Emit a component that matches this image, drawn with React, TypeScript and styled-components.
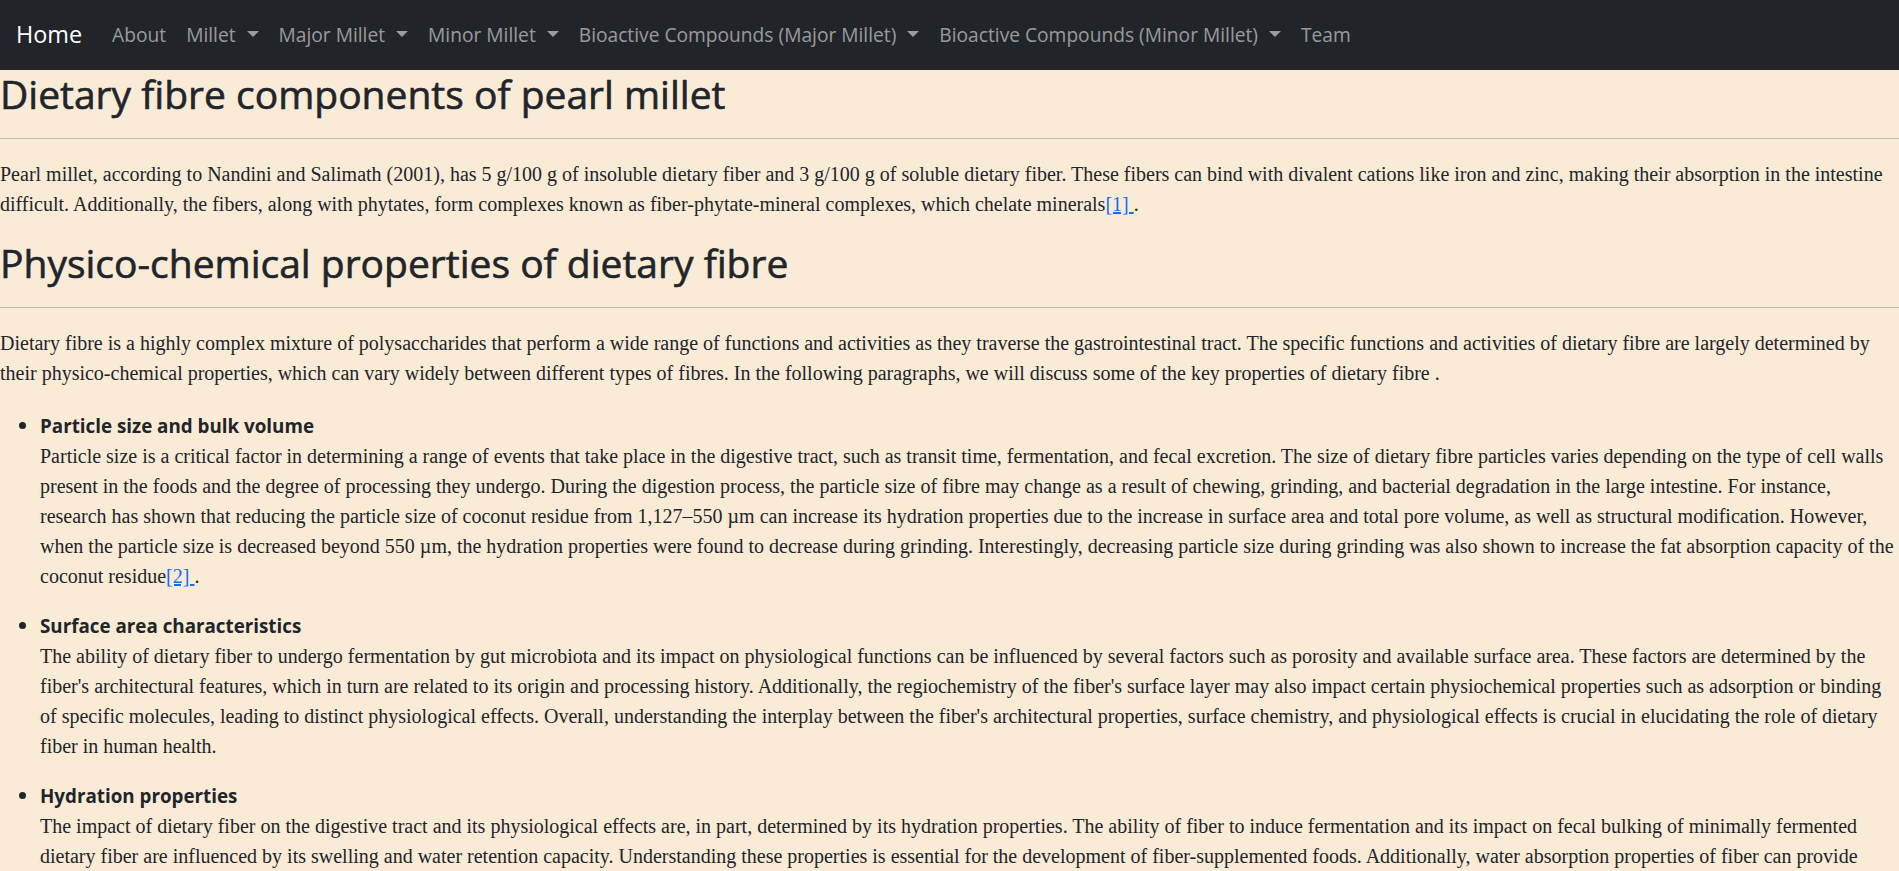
import React from "react";
import styled, { createGlobalStyle } from "styled-components";

const GlobalStyle = createGlobalStyle`
  html, body {
    margin: 0;
    padding: 0;
    background: #faebd7;
  }
  body {
    font-family: "Open Sans", "Noto Sans", Arial, sans-serif;
    font-size: 20px;
    line-height: 1.5;
    color: #212529;
  }
  *, *::before, *::after { box-sizing: border-box; }
`;

const Navbar = styled.nav`
  display: flex;
  align-items: center;
  height: 70px;
  padding: 10px 16px;
  background: #212529;
`;

const Brand = styled.a`
  font-size: 23.4px;
  line-height: 37.5px;
  color: #fff;
  text-decoration: none;
  margin-right: 20px;
  white-space: nowrap;
`;

const NavList = styled.ul`
  display: flex;
  align-items: center;
  list-style: none;
  margin: 0;
  padding: 0;
`;

const NavLink = styled.a`
  display: block;
  padding: 10px;
  font-size: 19.2px;
  line-height: 30px;
  color: rgba(255, 255, 255, 0.55);
  text-decoration: none;
  white-space: nowrap;
`;

const Caret = styled.span`
  display: inline-block;
  margin-left: 11px;
  vertical-align: 5px;
  border-top: 6px solid;
  border-left: 6px solid transparent;
  border-right: 6px solid transparent;
  border-bottom: 0;
`;

const Main = styled.main`
  display: block;
`;

const Heading = styled.h2`
  font-size: 39px;
  font-weight: 500;
  line-height: 48px;
  margin: 0 0 10px;
  color: #212529;
  -webkit-text-stroke: 0.6px #212529;
`;

const Rule = styled.hr`
  margin: 20px 0;
  border: 0;
  border-top: 1px solid #212529;
  opacity: 0.25;
`;

const Para = styled.p`
  font-family: "Liberation Serif", "Times New Roman", serif;
  font-size: 20px;
  line-height: 30px;
  margin: 0 0 20px;
`;

const Ref = styled.a`
  color: #0d6efd;
  text-decoration: underline;
`;

const List = styled.ul`
  margin: 23px 0 20px;
  padding: 0 0 0 40px;
`;

const Item = styled.li`
  line-height: 30px;
`;

const ItemTitle = styled.strong`
  display: block;
  font-weight: 700;
  font-size: 18.8px;
`;

const navItems: { label: string; dropdown: boolean }[] = [
  { label: "About", dropdown: false },
  { label: "Millet", dropdown: true },
  { label: "Major Millet", dropdown: true },
  { label: "Minor Millet", dropdown: true },
  { label: "Bioactive Compounds (Major Millet)", dropdown: true },
  { label: "Bioactive Compounds (Minor Millet)", dropdown: true },
  { label: "Team", dropdown: false },
];

export default function App() {
  return (
    <>
      <GlobalStyle />
      <Navbar>
        <Brand href="#">Home</Brand>
        <NavList>
          {navItems.map((n) => (
            <li key={n.label}>
              <NavLink href="#">
                {n.label}
                {n.dropdown && <Caret />}
              </NavLink>
            </li>
          ))}
        </NavList>
      </Navbar>
      <Main>
        <Heading>Dietary fibre components of pearl millet</Heading>
        <Rule />
        <Para>
          Pearl millet, according to Nandini and Salimath (2001), has 5 g/100 g of insoluble dietary fiber and 3 g/100 g of
          soluble dietary fiber. These fibers can bind with divalent cations like iron and zinc, making their absorption in
          the intestine difficult. Additionally, the fibers, along with phytates, form complexes known as
          fiber-phytate-mineral complexes, which chelate minerals<Ref href="#">[1] </Ref>.
        </Para>
        <Heading>Physico-chemical properties of dietary fibre</Heading>
        <Rule />
        <Para>
          Dietary fibre is a highly complex mixture of polysaccharides that perform a wide range of functions and
          activities as they traverse the gastrointestinal tract. The specific functions and activities of dietary fibre
          are largely determined by their physico-chemical properties, which can vary widely between different types of
          fibres. In the following paragraphs, we will discuss some of the key properties of dietary fibre .
        </Para>
        <List>
          <Item>
            <ItemTitle>Particle size and bulk volume</ItemTitle>
            <Para>
              Particle size is a critical factor in determining a range of events that take place in the digestive tract,
              such as transit time, fermentation, and fecal excretion. The size of dietary fibre particles varies
              depending on the type of cell walls present in the foods and the degree of processing they undergo. During
              the digestion process, the particle size of fibre may change as a result of chewing, grinding, and
              bacterial degradation in the large intestine. For instance, research has shown that reducing the particle
              size of coconut residue from 1,127–550 µm can increase its hydration properties due to the increase in
              surface area and total pore volume, as well as structural modification. However, when the particle size is
              decreased beyond 550 µm, the hydration properties were found to decrease during grinding. Interestingly,
              decreasing particle size during grinding was also shown to increase the fat absorption capacity of the
              coconut residue<Ref href="#">[2] </Ref>.
            </Para>
          </Item>
          <Item>
            <ItemTitle>Surface area characteristics</ItemTitle>
            <Para>
              The ability of dietary fiber to undergo fermentation by gut microbiota and its impact on physiological
              functions can be influenced by several factors such as porosity and available surface area. These factors
              are determined by the fiber's architectural features, which in turn are related to its origin and
              processing history. Additionally, the regiochemistry of the fiber's surface layer may also impact certain
              physiochemical properties such as adsorption or binding of specific molecules, leading to distinct
              physiological effects. Overall, understanding the interplay between the fiber's architectural properties,
              surface chemistry, and physiological effects is crucial in elucidating the role of dietary fiber in human
              health.
            </Para>
          </Item>
          <Item>
            <ItemTitle>Hydration properties</ItemTitle>
            <Para>
              The impact of dietary fiber on the digestive tract and its physiological effects are, in part, determined
              by its hydration properties. The ability of fiber to induce fermentation and its impact on fecal bulking of
              minimally fermented dietary fiber are influenced by its swelling and water retention capacity.
              Understanding these properties is essential for the development of fiber-supplemented foods. Additionally,
              water absorption properties of fiber can provide insights into its potential role in satiety and weight
              management.
            </Para>
          </Item>
        </List>
      </Main>
    </>
  );
}
